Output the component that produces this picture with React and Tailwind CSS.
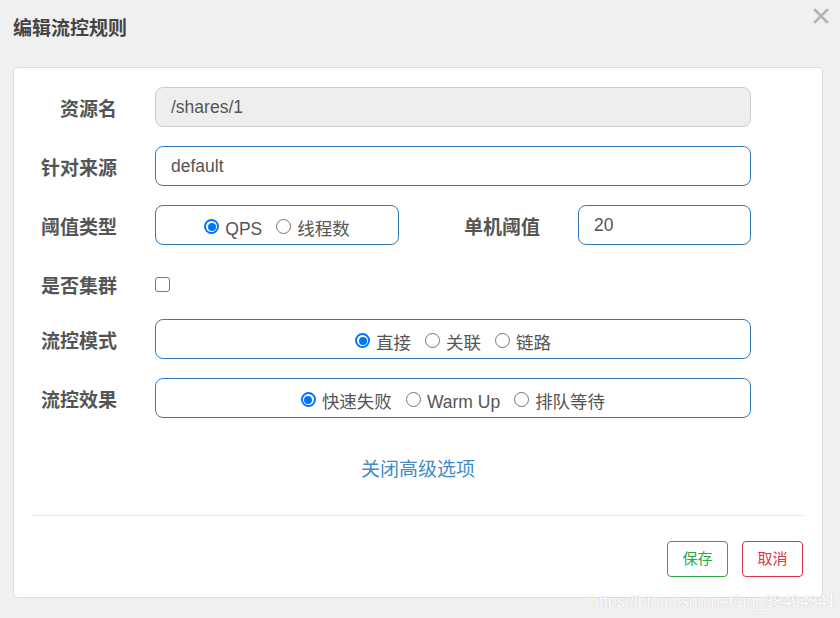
import React from 'react';

const font = { fontFamily: '"Liberation Sans", "Noto Sans CJK SC", sans-serif' };

const Radio = ({ checked, label }) => (
  <span className="flex items-center">
    {checked ? (
      <span className="w-[15px] h-[15px] rounded-full border-[2px] border-[#0075ff] flex items-center justify-center bg-white">
        <span className="w-[8px] h-[8px] rounded-full bg-[#0075ff]" />
      </span>
    ) : (
      <span className="w-[15px] h-[15px] rounded-full border border-[#767676] bg-white" />
    )}
    <span className="ml-[6px] text-[17.5px] text-[#555] pt-[5px]">{label}</span>
  </span>
);

const Label = ({ children, className = '' }) => (
  <div className={`text-[19px] font-bold text-[#555] text-right pt-[9px] ${className}`}>{children}</div>
);

const RadioBox = ({ options, className = '' }) => (
  <div className={`h-[40px] border border-[#337ab7] rounded-[8px] flex items-center justify-center gap-[14px] pt-[3px] ${className}`}>
    {options.map((o, i) => (
      <Radio key={i} checked={i === 0} label={o} />
    ))}
  </div>
);

const App = () => {
  return (
    <div className="relative w-[840px] h-[618px] bg-[#f0f0f0] overflow-hidden" style={font}>
      {/* 标题栏 */}
      <div className="h-[67px] pl-[13px] pt-[15px] flex items-start justify-between">
        <h1 className="text-[19px] font-bold text-[#444]">编辑流控规则</h1>
        <svg className="mr-[11px] mt-[-7px]" width="16" height="16" viewBox="0 0 16 16">
          <path d="M2 2 L14 14 M14 2 L2 14" stroke="#b3b3b3" strokeWidth="2.6" strokeLinecap="square" />
        </svg>
      </div>

      {/* 表单 */}
      <div className="mx-[13px] w-[810px] h-[531px] bg-white border border-[#dcdcdc] rounded-[4px] px-[19px] pt-[19px]">
        <div className="flex items-start mb-[19px]">
          <Label className="w-[84px]">资源名</Label>
          <div className="ml-[38px] w-[596px] h-[40px] bg-[#eeeeee] border border-[#cccccc] rounded-[8px] px-[15px] flex items-center text-[17.5px] text-[#555]">
            /shares/1
          </div>
        </div>

        <div className="flex items-start mb-[19px]">
          <Label className="w-[84px]">针对来源</Label>
          <div className="ml-[38px] w-[596px] h-[40px] border border-[#337ab7] rounded-[8px] px-[15px] flex items-center text-[17.5px] text-[#555]">
            default
          </div>
        </div>

        <div className="flex items-start mb-[19px]">
          <Label className="w-[84px]">阈值类型</Label>
          <RadioBox className="ml-[38px] w-[244px]" options={['QPS', '线程数']} />
          <Label className="w-[141px]">单机阈值</Label>
          <div className="ml-[38px] w-[173px] h-[40px] border border-[#337ab7] rounded-[8px] px-[15px] flex items-center text-[17.5px] text-[#555]">
            20
          </div>
        </div>

        <div className="flex items-start h-[36px] mb-[19px]">
          <Label className="w-[84px]">是否集群</Label>
          <span className="ml-[38px] mt-[13px] w-[15px] h-[15px] border border-[#767676] rounded-[3px] bg-white" />
        </div>

        <div className="flex items-start mb-[19px]">
          <Label className="w-[84px]">流控模式</Label>
          <RadioBox className="ml-[38px] w-[596px]" options={['直接', '关联', '链路']} />
        </div>

        <div className="flex items-start">
          <Label className="w-[84px]">流控效果</Label>
          <RadioBox className="ml-[38px] w-[596px]" options={['快速失败', 'Warm Up', '排队等待']} />
        </div>

        <div className="flex justify-center mt-[38px]">
          <span className="text-[19px] text-[#428bca]">关闭高级选项</span>
        </div>

        <div className="mt-[30px] border-t border-[#e5e5e5]" />

        <div className="flex justify-end gap-[14px] mt-[25px]">
          <button className="w-[61px] h-[36px] border border-[#28a745] rounded-[4px] text-[#28a745] text-[15px] pt-[2px]">保存</button>
          <button className="w-[61px] h-[36px] border border-[#dc3545] rounded-[4px] text-[#dc3545] text-[15px] pt-[2px]">取消</button>
        </div>
      </div>

      <div className="absolute left-[590px] top-[590px] text-[16px] text-white [text-shadow:0_0_1px_#b5b5b5]" style={{ fontFamily: '"Liberation Sans", sans-serif' }}>
        https://blog.csdn.net/qq_38494341
      </div>
    </div>
  );
};

export default App;
